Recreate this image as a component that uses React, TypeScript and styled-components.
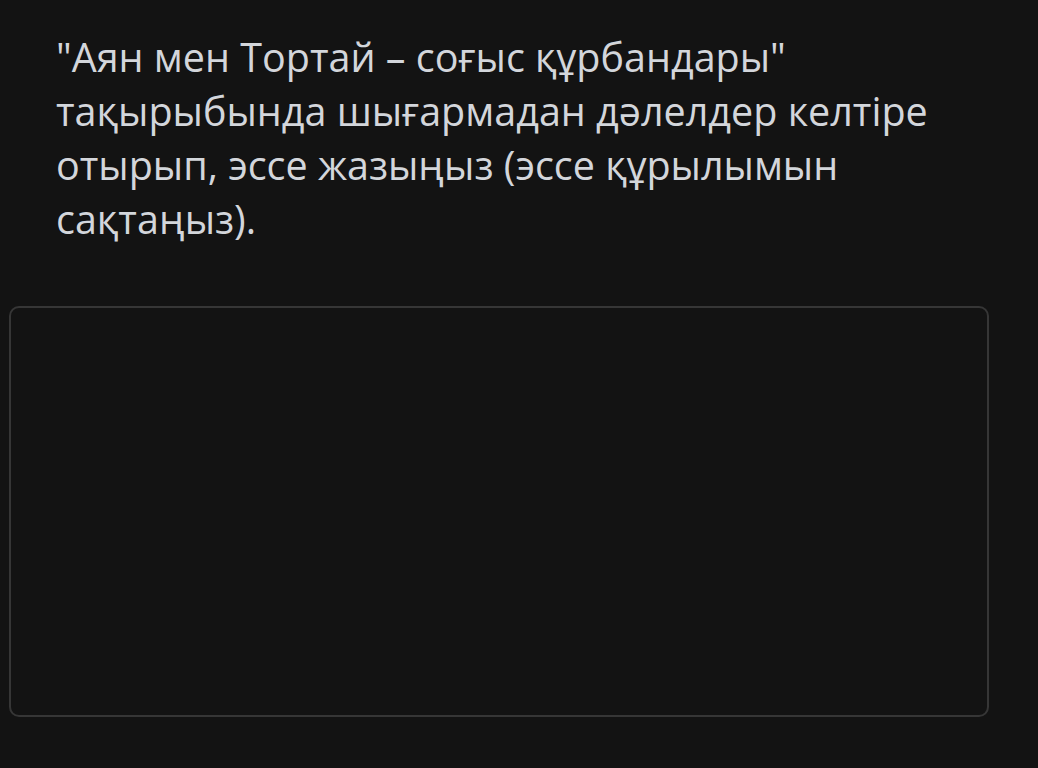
import React from "react";
import styled, { createGlobalStyle } from "styled-components";

const Global = createGlobalStyle`
  html, body { margin: 0; padding: 0; background: #131313; }
  body { font-family: "Open Sans", "Noto Sans", sans-serif; }
`;

const Page = styled.div`
  width: 1038px;
  height: 768px;
  background: #131313;
  display: flex;
  flex-direction: column;
  padding: 30px 49px 0 9px;
  box-sizing: border-box;
`;

const Question = styled.p`
  margin: 0;
  padding: 0 0 0 47px;
  font-size: 39.5px;
  line-height: 54px;
  color: #d3d6db;
  font-weight: 400;
`;

const Answer = styled.textarea`
  margin-top: 60px;
  width: 980px;
  height: 411px;
  box-sizing: border-box;
  background: #131313;
  border: 2px solid #363636;
  border-radius: 10px;
  resize: none;
  outline: none;
  color: #d3d6db;
  font-family: inherit;
  font-size: 20px;
`;

export default function App() {
  return (
    <Page>
      <Global />
      <Question>
        "Аян мен Тортай – соғыс құрбандары" тақырыбында шығармадан дәлелдер келтіре отырып, эссе жазыңыз (эссе құрылымын сақтаңыз).
      </Question>
      <Answer />
    </Page>
  );
}
